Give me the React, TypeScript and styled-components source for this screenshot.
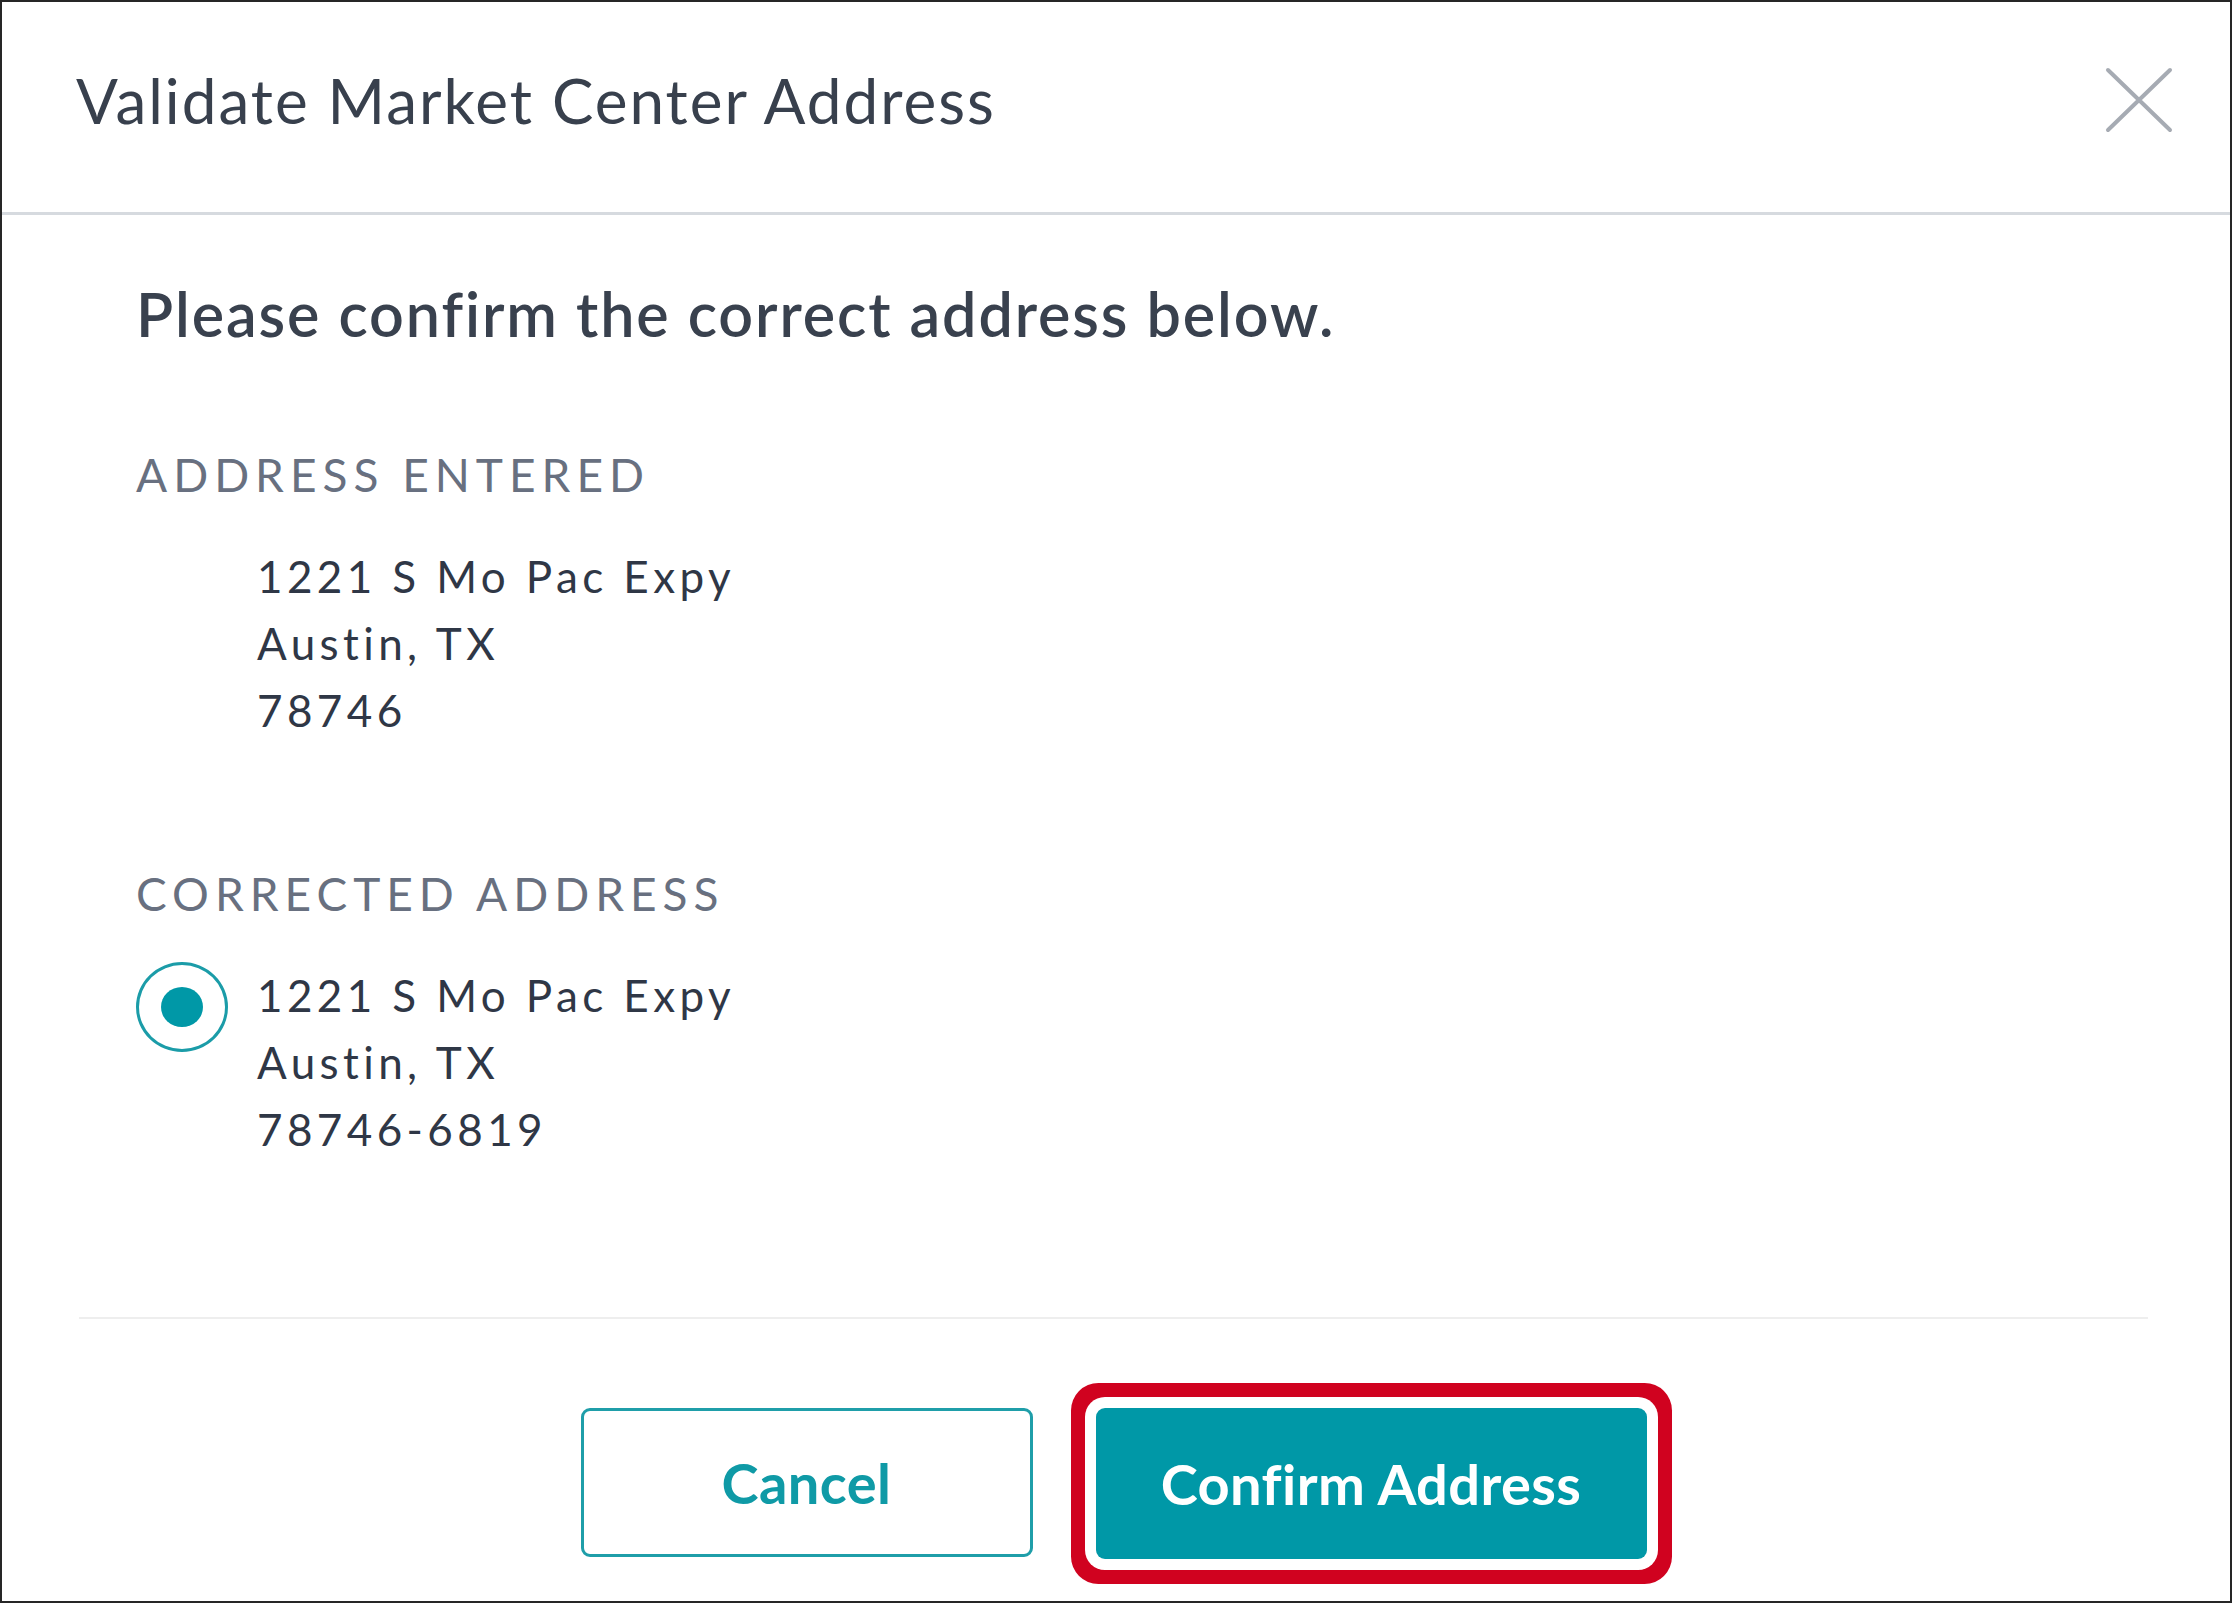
import React, { useState } from "react";
import styled, { createGlobalStyle } from "styled-components";

const GlobalStyle = createGlobalStyle`
  html, body {
    margin: 0;
    padding: 0;
    background: #fff;
  }
  body {
    font-family: Lato, "Noto Sans", sans-serif;
  }
  * {
    box-sizing: border-box;
  }
`;

const teal = "#0098a7";

const Modal = styled.div`
  width: 2232px;
  height: 1603px;
  border: 2px solid #262626;
  background: #fff;
  display: flex;
  flex-direction: column;
`;

const Header = styled.header`
  height: 213px;
  flex-shrink: 0;
  display: flex;
  align-items: center;
  justify-content: space-between;
  padding: 0 56px 14px 74px;
  border-bottom: 3px solid #d6dadf;
`;

const Title = styled.h1`
  margin: 0;
  font-size: 62px;
  line-height: 74px;
  font-weight: 400;
  letter-spacing: 2px;
  color: #38404d;
`;

const CloseButton = styled.button`
  width: 70px;
  height: 70px;
  padding: 0;
  border: 0;
  background: none;
  display: flex;
  align-items: center;
  justify-content: center;
  cursor: pointer;
`;

const Body = styled.main`
  flex: 1;
  padding: 62px 137px 0 134px;
`;

const Heading = styled.h2`
  margin: 0 0 96px;
  font-size: 61px;
  line-height: 74px;
  font-weight: 600;
  letter-spacing: 1.9px;
  color: #39414e;
`;

const SectionLabel = styled.div<{ $gap: number }>`
  font-size: 46px;
  line-height: 56px;
  font-weight: 400;
  letter-spacing: 6px;
  text-transform: uppercase;
  color: #687080;
  margin-bottom: 40px;
  margin-top: ${(p) => p.$gap}px;
`;

const OptionRow = styled.div`
  display: flex;
  align-items: flex-start;
`;

const RadioSlot = styled.div`
  width: 121px;
  flex-shrink: 0;
`;

const Radio = styled.span<{ $checked: boolean }>`
  width: 92px;
  height: 90px;
  border-radius: 50%;
  border: 3px solid #1b9ca8;
  display: flex;
  align-items: center;
  justify-content: center;

  &::after {
    content: "";
    width: 42px;
    height: 40px;
    border-radius: 50%;
    background: ${teal};
    display: ${(p) => (p.$checked ? "block" : "none")};
  }
`;

const AddressLines = styled.div`
  font-size: 44px;
  line-height: 67px;
  letter-spacing: 4.4px;
  color: #2f3746;
`;

const Footer = styled.footer`
  flex-shrink: 0;
  padding: 0 82px 42px 77px;
`;

const Divider = styled.hr`
  margin: 0 0 89px;
  border: 0;
  height: 2px;
  background: #eeeeee;
`;

const ButtonRow = styled.div`
  display: flex;
  justify-content: center;
  gap: 63px;
`;

const Button = styled.button<{ $primary?: boolean; $focused?: boolean }>`
  height: ${(p) => (p.$primary ? 151 : 149)}px;
  width: ${(p) => (p.$primary ? 551 : 452)}px;
  border-radius: 9px;
  font-family: Lato, "Noto Sans", sans-serif;
  font-size: 56px;
  font-weight: 700;
  letter-spacing: 0.4px;
  cursor: pointer;
  border: ${(p) => (p.$primary ? "0" : `3px solid #1f9ea9`)};
  background: ${(p) => (p.$primary ? teal : "#fff")};
  color: ${(p) => (p.$primary ? "#fff" : "#0f9aa6")};
  box-shadow: ${(p) =>
    p.$focused ? "0 0 0 11px #fff, 0 0 0 25px #d0021f" : "none"};
`;

const entered = ["1221 S Mo Pac Expy", "Austin, TX", "78746"];
const corrected = ["1221 S Mo Pac Expy", "Austin, TX", "78746-6819"];

const CloseIcon = () => (
  <svg width="68" height="66" viewBox="0 0 68 66">
    <path
      d="M3 3 L65 63 M65 3 L3 63"
      stroke="#a6abb3"
      strokeWidth="4"
      strokeLinecap="round"
      fill="none"
    />
  </svg>
);

const App = () => {
  const [checked] = useState(true);
  return (
    <>
      <GlobalStyle />
      <Modal>
        <Header>
          <Title>Validate Market Center Address</Title>
          <CloseButton aria-label="Close">
            <CloseIcon />
          </CloseButton>
        </Header>
        <Body>
          <Heading>Please confirm the correct address below.</Heading>

          <SectionLabel $gap={0}>Address Entered</SectionLabel>
          <OptionRow>
            <RadioSlot />
            <AddressLines>
              {entered.map((line) => (
                <div key={line}>{line}</div>
              ))}
            </AddressLines>
          </OptionRow>

          <SectionLabel $gap={122}>Corrected Address</SectionLabel>
          <OptionRow>
            <RadioSlot>
              <Radio $checked={checked} />
            </RadioSlot>
            <AddressLines>
              {corrected.map((line) => (
                <div key={line}>{line}</div>
              ))}
            </AddressLines>
          </OptionRow>
        </Body>
        <Footer>
          <Divider />
          <ButtonRow>
            <Button>Cancel</Button>
            <Button $primary $focused>
              Confirm Address
            </Button>
          </ButtonRow>
        </Footer>
      </Modal>
    </>
  );
};

export default App;
